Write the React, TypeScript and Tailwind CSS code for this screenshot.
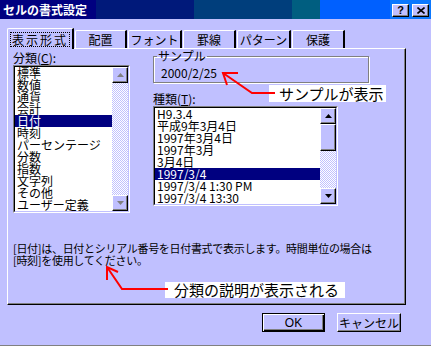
import React from "react"

const categories = ["標準", "数値", "通貨", "会計", "日付", "時刻", "パーセンテージ", "分数", "指数", "文字列", "その他", "ユーザー定義"]
const types = ["H9.3.4", "平成9年3月4日", "1997年3月4日", "1997年3月", "3月4日", "1997/3/4", "1997/3/4 1:30 PM", "1997/3/4 13:30"]

function Arrow({ up, color }: { up?: boolean; color: string }) {
  return (
    <svg width="7" height="4" viewBox="0 0 7 4">
      <polygon points={up ? "3.5,0 7,4 0,4" : "0,0 7,0 3.5,4"} fill={color} />
    </svg>
  )
}

function ScrollButton({ up, color }: { up?: boolean; color: string }) {
  return (
    <div className="h-[16px] w-[16px] flex items-center justify-center bg-[#c0c0ff] border-t border-l border-white border-r border-b border-r-black border-b-black shadow-[inset_-1px_-1px_0_#808080]">
      <Arrow up={up} color={color} />
    </div>
  )
}

function ListBox({ items, selected, width, height, thumb }: { items: string[]; selected: number; width: string; height: string; thumb?: boolean }) {
  return (
    <div className={`${width} ${height} border border-t-[#808080] border-l-[#808080] border-r-white border-b-white`}>
      <div className="h-full w-full flex border border-t-black border-l-black border-r-[#c0c0ff] border-b-[#c0c0ff] bg-white">
        <div className="flex-1 overflow-hidden">
          {items.map((it, i) => (
            <div key={it} className={`h-[12px] leading-[12px] pl-[2px] whitespace-nowrap ${i === selected ? "bg-[#000080] text-white" : "text-black"}`}>
              {it}
            </div>
          ))}
        </div>
        <div className="w-[16px] flex flex-col">
          <ScrollButton up color={thumb ? "#000" : "#808080"} />
          {thumb && (
            <div className="h-[27px] bg-[#c0c0ff] border-t border-l border-white border-r border-b border-r-black border-b-black shadow-[inset_-1px_-1px_0_#808080]" />
          )}
          <div className="flex-1 bg-[image:repeating-conic-gradient(#c0c0ff_0_25%,#ffffff_0_50%)] bg-[length:2px_2px]" />
          <ScrollButton color={thumb ? "#000" : "#808080"} />
        </div>
      </div>
    </div>
  )
}

export default function App() {
  const tabs = [
    { label: "配置", w: "w-[52px]" },
    { label: "フォント", w: "w-[54px]" },
    { label: "罫線", w: "w-[53px]" },
    { label: "パターン", w: "w-[54px]" },
    { label: "保護", w: "w-[53px]" },
  ]

  return (
    <div className="relative w-[431px] h-[346px] overflow-hidden bg-[#c0c0ff] border-b border-[#808080] font-['Noto_Sans_CJK_JP',sans-serif] text-[12px] text-black">
      {/* Title bar */}
      <div className="h-[19px] flex items-center justify-between pl-[3px] pr-[2px] bg-[linear-gradient(to_right,#000080_96px,#00197a_96px,#00197a_194px,#003e7c_194px,#003e7c_292px,#005e80_292px,#005e80_320px,#0060ff_320px,#0060ff_390px,#0b78ff_390px)]">
        <span className="text-white font-bold text-[12px] leading-[19px]">セルの書式設定</span>
        <div className="flex gap-[3px] mt-[2px]">
          <div className="w-[17px] h-[13px] flex items-center justify-center bg-[#c0c0ff] border-t border-l border-white border-r border-b border-r-black border-b-black shadow-[inset_-1px_-1px_0_#808080] font-['Liberation_Sans',sans-serif] font-bold text-[11px] leading-none">
            ?
          </div>
          <div className="w-[17px] h-[13px] flex items-center justify-center bg-[#c0c0ff] border-t border-l border-white border-r border-b border-r-black border-b-black shadow-[inset_-1px_-1px_0_#808080]">
            <svg width="8" height="7" viewBox="0 0 8 7">
              <path d="M0.5 0.5 L7.5 6.5 M7.5 0.5 L0.5 6.5" stroke="#000" strokeWidth="1.6" />
            </svg>
          </div>
        </div>
      </div>

      {/* Tabs */}
      <div className="mt-[9px] pl-[7px] flex items-end">
        <div className="relative z-10 -mb-px h-[21px] w-[67px] bg-[#c0c0ff] border-t border-l border-white border-r-2 border-r-black rounded-tl-[2px] flex items-center justify-center">
          <span className="px-[1px] leading-[13px] border border-dotted border-black tracking-[2px]">表示形式</span>
        </div>
        {tabs.map((t) => (
          <div key={t.label} className={`${t.w} h-[18px] ml-[1px] border-t border-l border-white border-r-2 border-r-black rounded-tl-[2px] flex items-center justify-center`}>
            {t.label}
          </div>
        ))}
      </div>

      {/* Panel */}
      <div className="ml-[7px] w-[399px] h-[257px] border-t border-l border-white border-r border-b border-r-black border-b-black shadow-[inset_-1px_-1px_0_#808080] pt-[1px] pl-[5px]">
        <div className="flex items-start">
          <div className="mt-[2px]">
            <div className="h-[12px] leading-[12px]">
              分類(<span className="underline">C</span>):
            </div>
            <div className="mt-[1px]">
              <ListBox items={categories} selected={4} width="w-[117px]" height="h-[148px]" />
            </div>
          </div>

          <div className="ml-[23px]">
            <fieldset className="w-[216px] h-[33px] m-0 p-0 border border-[#808080] shadow-[inset_1px_1px_0_#ffffff,1px_1px_0_#ffffff]">
              <legend className="ml-[3px] px-[1px] h-[12px] leading-[12px]">サンプル</legend>
              <div className="pl-[7px] mt-[5px] leading-[12px]">2000/2/25</div>
            </fieldset>
            <div className="mt-[10px] h-[12px] leading-[12px]">
              種類(<span className="underline">T</span>):
            </div>
            <div className="mt-[1px]">
              <ListBox items={types} selected={5} width="w-[185px]" height="h-[100px]" thumb />
            </div>
          </div>
        </div>

        <p className="mt-[29px] text-[11px] leading-[12px] tracking-[-0.3px] whitespace-nowrap">
          [日付]は、日付とシリアル番号を日付書式で表示します。時間単位の場合は
          <br />
          [時刻]を使用してください。
        </p>
      </div>

      {/* Buttons */}
      <div className="mt-[8px] pr-[30px] flex justify-end gap-[12px]">
        <button className="w-[63px] h-[19px] border border-black bg-[#c0c0ff] shadow-[inset_1px_1px_0_#ffffff,inset_-1px_-1px_0_#000000,inset_-2px_-2px_0_#808080] font-['Liberation_Sans',sans-serif] text-[12px] leading-none">
          OK
        </button>
        <button className="w-[64px] h-[19px] bg-[#c0c0ff] border-t border-l border-white border-r border-b border-r-black border-b-black shadow-[inset_-1px_-1px_0_#808080] text-[12px] leading-none">
          キャンセル
        </button>
      </div>

      {/* Annotations */}
      <div className="absolute left-[269px] top-[85px] w-[117px] h-[17px] bg-white pl-[10px] text-[15px] leading-[17px] whitespace-nowrap">
        サンプルが表示
      </div>
      <div className="absolute left-[165px] top-[282px] w-[180px] h-[16px] bg-white pl-[9px] text-[15px] leading-[16px] whitespace-nowrap">
        分類の説明が表示される
      </div>
      <svg className="absolute inset-0 pointer-events-none" width="431" height="346">
        <g stroke="#ff0000" strokeWidth="2" fill="none">
          <polyline points="275,93 252,93 223,73" />
          <polyline points="238,73 223,73 227,85" />
          <polyline points="168,289 122,289 107,267" />
          <polyline points="107,280 107,267 118,272" />
        </g>
      </svg>
    </div>
  )
}
